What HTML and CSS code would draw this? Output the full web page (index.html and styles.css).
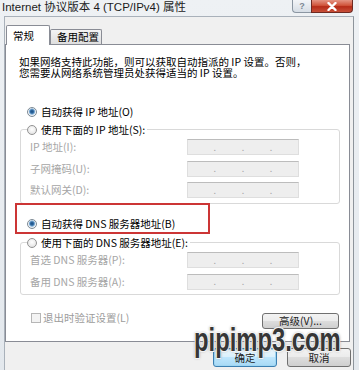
FILE: index.html
```html
<!DOCTYPE html>
<html>
<head>
<meta charset="utf-8">
<link rel="stylesheet" href="styles.css">
</head>
<body>
<div class="window">
  <div class="titlebar">
    <span class="title">Internet 协议版本 4 (TCP/IPv4) 属性</span>
    <div class="caption">
      <span class="cap help">?</span>
      <span class="cap close"><svg width="12" height="9" viewBox="0 0 12 9"><path d="M2.5 1 L9.5 8 M9.5 1 L2.5 8" stroke="#fff" stroke-width="2.4" stroke-linecap="round"/></svg></span>
    </div>
  </div>
  <div class="client">
    <div class="tabs">
      <div class="tab active">常规</div>
      <div class="tab">备用配置</div>
    </div>
    <div class="panel">
      <p class="desc">如果网络支持此功能，则可以获取自动指派的 IP 设置。否则，<br>您需要从网络系统管理员处获得适当的 IP 设置。</p>
      <div class="radio r-ip"><span class="rdot on"></span>自动获得 IP 地址(O)</div>
      <div class="group g-ip">
        <div class="radio legend"><span class="rdot"></span>使用下面的 IP 地址(S):</div>
        <div class="field first"><span class="flabel">IP 地址(I):</span><span class="ip"><i>.</i><i>.</i><i>.</i></span></div>
        <div class="field"><span class="flabel">子网掩码(U):</span><span class="ip"><i>.</i><i>.</i><i>.</i></span></div>
        <div class="field"><span class="flabel">默认网关(D):</span><span class="ip"><i>.</i><i>.</i><i>.</i></span></div>
      </div>
      <div class="radio r-dns"><span class="rdot on"></span>自动获得 DNS 服务器地址(B)</div>
      <div class="group g-dns">
        <div class="radio legend"><span class="rdot"></span>使用下面的 DNS 服务器地址(E):</div>
        <div class="field first"><span class="flabel">首选 DNS 服务器(P):</span><span class="ip"><i>.</i><i>.</i><i>.</i></span></div>
        <div class="field"><span class="flabel">备用 DNS 服务器(A):</span><span class="ip"><i>.</i><i>.</i><i>.</i></span></div>
      </div>
      <div class="bottom-row">
        <div class="check"><span class="box"></span>退出时验证设置(L)</div>
        <div class="btn adv">高级(V)...</div>
      </div>
      <div class="highlight"></div>
    </div>
    <div class="footer">
      <div class="btn ok">确定</div>
      <div class="btn">取消</div>
    </div>
  </div>
  <div class="watermark">pipimp3.com</div>
</div>
</body>
</html>
```
FILE: styles.css
```css
* { box-sizing: border-box; margin: 0; padding: 0; }
body { margin: 0; width: 359px; height: 370px; overflow: hidden; font-family: "Noto Sans CJK SC", sans-serif; background: #e9edf1; }
.window { position: relative; width: 359px; height: 370px; background: linear-gradient(#eef1f4, #e3e8ed); display: flex; flex-direction: column; }
.titlebar { height: 16px; display: flex; justify-content: space-between; align-items: flex-start; padding: 0 6px 0 2px; }
.title { font-family: "Liberation Sans", "Noto Sans CJK SC", sans-serif; font-size: 11.5px; line-height: 15px; color: #1b1b1b; }
.caption { display: flex; }
.cap { height: 13px; display: flex; align-items: center; justify-content: center; border: 1px solid #8b96a2; border-top: none; }
.help { width: 19px; border-radius: 0 0 0 4px; border-right: none; background: linear-gradient(#f3f5f8, #d6dde5); color: #7c8794; font-family: "Liberation Sans", sans-serif; font-weight: bold; font-size: 9px; }
.close { width: 42px; border-radius: 0 0 4px 0; border-color: #6e2a22; background: linear-gradient(#e49483, #d0553c 45%, #b62c18 55%, #c8503a); }
.client { flex: 1; margin: 0 5px 0 4px; border-left: 1px solid #a9b1ba; border-top: 1px solid #a9b1ba; border-right: 1px solid #8d949b; background: #f0f0f0; padding: 8px 2px 0 0; display: flex; flex-direction: column; }
.tabs { display: flex; align-items: flex-end; height: 20px; margin-bottom: -1px; padding-left: 1px; }
.tab { width: 52px; height: 15px; margin-bottom: 1px; padding-left: 6px; border: 1px solid #898c95; border-bottom: none; border-radius: 2px 2px 0 0; background: linear-gradient(#f4f4f4, #dedede); font-size: 10.5px; line-height: 13px; color: #000; }
.tab.active { width: 44px; height: 20px; margin-bottom: 0; background: #fff; position: relative; z-index: 1; line-height: 19px; }
.panel { position: relative; width: 345px; height: 298px; border: 1px solid #898c95; background: #fff; }
.desc { margin: 11px 0 0 13px; font-size: 10.5px; line-height: 11px; color: #000; white-space: nowrap; }
.radio { display: flex; align-items: center; gap: 4px; height: 14px; font-size: 10.5px; line-height: 14px; color: #000; white-space: nowrap; }
.r-ip { margin: 27px 0 0 21px; }
.r-dns { margin: 13px 0 0 21px; }
.rdot { width: 10px; height: 10px; border-radius: 50%; border: 1px solid #929292; background: radial-gradient(circle at 50% 40%, #ffffff, #dcdcdc); flex: none; }
.rdot.on { border-color: #7d8a95; background: radial-gradient(circle at 50% 45%, #1f4f80 0, #2f6aa3 1.6px, #8fb8dc 2.8px, #f4f7fa 3.6px, #d9dfe5 5px); }
.group { width: 320px; margin-left: 14px; border: 1px solid #d9d9d9; border-radius: 3px; padding: 0 0 5px 9px; }
.g-ip { margin-top: 10px; }
.g-dns { margin-top: 11px; padding-bottom: 4px; }
.legend { width: max-content; margin: -7px 0 0 -3px; padding-right: 2px; background: #fff; }
.field { display: grid; grid-template-columns: 157px 112px; align-items: center; margin-top: 5.5px; }
.field.first { margin-top: 2px; }
.flabel { font-size: 10.5px; line-height: 14px; color: #a6a6a6; white-space: nowrap; }
.ip { height: 16px; display: flex; justify-content: space-evenly; align-items: center; background: #eeeeee; border: 1px solid #dedede; border-top-color: #bcbcbc; }
.ip i { font-style: normal; font-size: 9px; line-height: 9px; color: #a8a8a8; }
.bottom-row { display: flex; justify-content: space-between; align-items: flex-start; margin-top: 16px; padding: 0 10px 0 25px; }
.check { display: flex; align-items: center; gap: 2px; height: 14px; font-size: 10.5px; line-height: 14px; color: #9c9c9c; }
.box { width: 10px; height: 10px; border: 1px solid #b6b6b6; background: #f3f3f3; }
.btn { width: 64px; height: 19px; display: flex; align-items: center; justify-content: center; border: 1px solid #707070; border-radius: 3px; background: linear-gradient(#f3f3f3 0, #ebebeb 50%, #dddddd 50%, #cfcfcf 100%); font-size: 10.5px; color: #222; }
.adv { width: 77px; height: 16px; margin-top: 2px; }
.highlight { position: absolute; left: 9px; top: 158px; width: 195px; height: 31px; border: 2px solid #cc3535; }
.footer { display: flex; justify-content: flex-end; gap: 10px; margin-top: 6px; }
.ok { border-color: #3c7fb1; background: linear-gradient(#eaf6fd 0, #d9f0fc 50%, #bee6fd 50%, #a7d9f5 100%); box-shadow: inset 0 0 0 1px #9fd6f3; }
.watermark { position: absolute; left: 194px; top: 322px; font-family: "Liberation Sans", sans-serif; font-weight: bold; font-size: 34px; line-height: 34px; color: #363636; transform: scaleX(0.7); transform-origin: left top; white-space: nowrap; text-shadow: -1px -1px 0 #f4f4f4, 1px -1px 0 #f4f4f4, -1px 1px 0 #f4f4f4, 1px 1px 0 #f4f4f4, 0 0 3px #555; }
```
